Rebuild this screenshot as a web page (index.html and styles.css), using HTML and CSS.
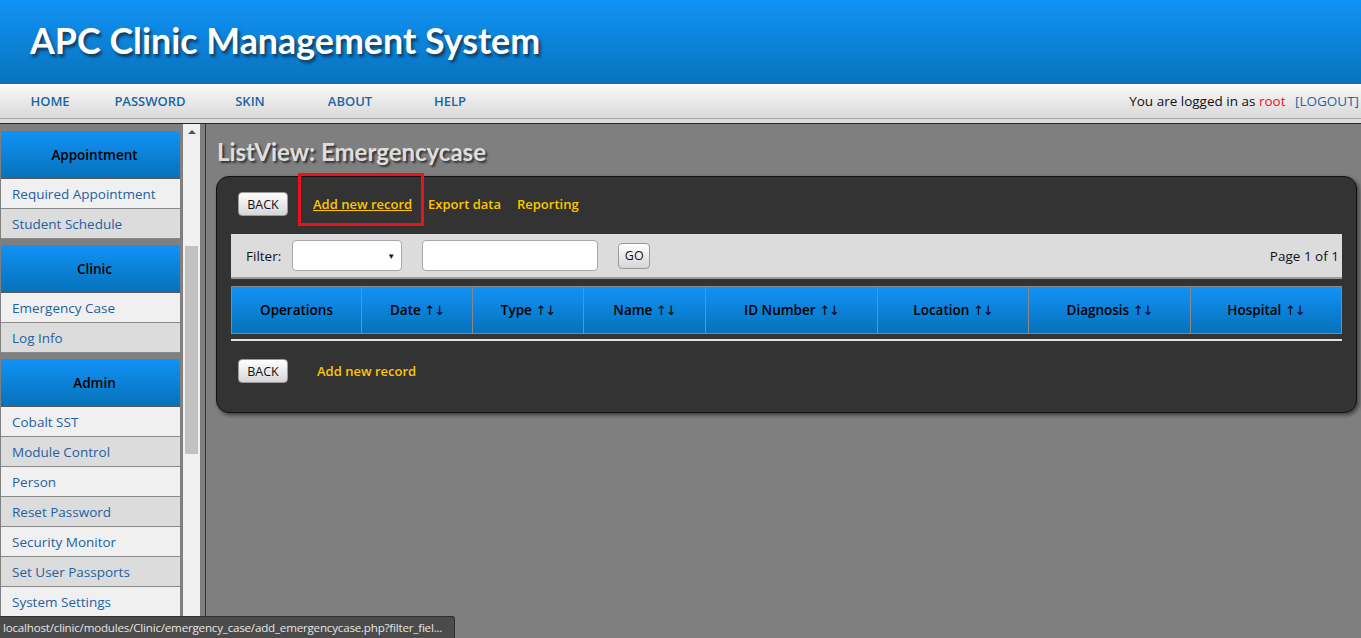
FILE: index.html
```html
<!DOCTYPE html>
<html>
<head>
<meta charset="utf-8">
<title>APC Clinic Management System</title>
<link rel="stylesheet" href="styles.css">
</head>
<body>
<header class="top">
  <h1 class="brand">APC Clinic Management System</h1>
</header>
<nav class="nav">
  <div class="nav-links">
    <a class="nav-item">HOME</a>
    <a class="nav-item">PASSWORD</a>
    <a class="nav-item">SKIN</a>
    <a class="nav-item">ABOUT</a>
    <a class="nav-item">HELP</a>
  </div>
  <div class="login">You are logged in as <span class="user">root</span> <a class="logout">[LOGOUT]</a></div>
</nav>
<div class="nav-under"></div>
<div class="layout">
  <aside class="side">
    <div class="menu">
      <div class="group">
        <div class="group-head">Appointment</div>
        <a class="item">Required Appointment</a>
        <a class="item alt">Student Schedule</a>
      </div>
      <div class="group">
        <div class="group-head">Clinic</div>
        <a class="item">Emergency Case</a>
        <a class="item alt">Log Info</a>
      </div>
      <div class="group">
        <div class="group-head">Admin</div>
        <a class="item">Cobalt SST</a>
        <a class="item alt">Module Control</a>
        <a class="item">Person</a>
        <a class="item alt">Reset Password</a>
        <a class="item">Security Monitor</a>
        <a class="item alt">Set User Passports</a>
        <a class="item">System Settings</a>
      </div>
    </div>
    <div class="scrollbar">
      <div class="sb-arrow"></div>
      <div class="sb-thumb"></div>
    </div>
  </aside>
  <main class="main">
    <h2 class="page-title">ListView: Emergencycase</h2>
    <section class="panel">
      <div class="actions">
        <button class="btn">BACK</button>
        <a class="link first underline">Add new record</a>
        <a class="link">Export data</a>
        <a class="link">Reporting</a>
      </div>
      <div class="highlight"></div>
      <div class="filter">
        <span class="filter-label">Filter:</span>
        <div class="select"><span class="caret">&#9660;</span></div>
        <div class="textbox"></div>
        <button class="btn go">GO</button>
        <span class="pager">Page 1 of 1</span>
      </div>
      <div class="table">
        <div class="th">Operations</div>
        <div class="th">Date <span class="arr">↑↓</span></div>
        <div class="th">Type <span class="arr">↑↓</span></div>
        <div class="th">Name <span class="arr">↑↓</span></div>
        <div class="th">ID Number <span class="arr">↑↓</span></div>
        <div class="th">Location <span class="arr">↑↓</span></div>
        <div class="th">Diagnosis <span class="arr">↑↓</span></div>
        <div class="th last">Hospital <span class="arr">↑↓</span></div>
      </div>
      <div class="rule"></div>
      <div class="actions bottom">
        <button class="btn">BACK</button>
        <a class="link second">Add new record</a>
      </div>
    </section>
  </main>
</div>
<div class="status">localhost/clinic/modules/Clinic/emergency_case/add_emergencycase.php?filter_fiel...</div>
</body>
</html>
```
FILE: styles.css
```css
* { box-sizing: border-box; }
html, body { margin: 0; padding: 0; height: 100%; overflow: hidden; }
body {
  background: #7f7f7f;
  font-family: "Open Sans", "Noto Sans", sans-serif;
  font-size: 14px;
  color: #000;
}
a { text-decoration: none; cursor: pointer; }

.top {
  height: 84px;
  background: linear-gradient(#1192f6, #0773bc);
  display: flex;
  align-items: center;
  padding-left: 30px;
}
.brand {
  margin: 0;
  font-family: "Lato", "Open Sans", sans-serif;
  font-weight: 700;
  font-size: 35.8px;
  color: #fff;
  text-shadow: 2px 3px 3px #123a5c;
  margin-top: -3px;
}

.nav {
  height: 35px;
  background: linear-gradient(#fafafa, #d9d9d9);
  border-bottom: 1px solid #a9a9a9;
  display: flex;
  align-items: center;
  justify-content: space-between;
}
.nav-links { display: flex; }
.nav-item {
  width: 100px;
  text-align: center;
  font-weight: 600;
  font-size: 13px;
  color: #1966a6;
}
.login {
  font-size: 13.5px;
  padding-right: 2px;
  color: #111;
}
.user { color: #e8141c; margin-right: 6px; }
.logout { color: #1966a6; }
.nav-under {
  height: 5px;
  background: #dcdcdc;
  border-bottom: 1px solid #2a2a2a;
}

.layout {
  display: flex;
  height: calc(100% - 125px);
}
.side {
  width: 206px;
  display: flex;
  border-right: 1px solid #333;
  flex: none;
}
.menu {
  width: 179px;
  margin-left: 1px;
  padding-top: 7px;
  display: flex;
  flex-direction: column;
  gap: 6px;
}
.group { display: flex; flex-direction: column; }
.group-head {
  height: 48px;
  background: linear-gradient(#1192f6, #0672ba);
  border-bottom: 1px solid #5a5a5a;
  display: flex;
  align-items: center;
  justify-content: center;
  padding-left: 8px;
  font-weight: 600;
  font-size: 13.5px;
  color: #000;
}
.item {
  height: 30px;
  background: #f0f0f0;
  border-bottom: 1px solid #8a8a8a;
  display: flex;
  align-items: center;
  padding-left: 11px;
  font-size: 13.5px;
  color: #2461a0;
}
.item.alt { background: #dcdcdc; }

.scrollbar {
  width: 17px;
  margin-left: 3px;
  background: #f0f0f0;
  display: flex;
  flex-direction: column;
  align-items: center;
}
.sb-arrow {
  margin-top: 6px;
  width: 0; height: 0;
  border-left: 4px solid transparent;
  border-right: 4px solid transparent;
  border-bottom: 4px solid #505050;
}
.sb-thumb {
  margin-top: 112px;
  width: 13px;
  height: 208px;
  background: #c1c1c1;
}

.main {
  flex: 1;
  padding: 0 4px 0 10px;
}
.page-title {
  margin: 13px 0 0 1px;
  height: 39px;
  font-family: "Lato", "Open Sans", sans-serif;
  font-weight: 700;
  font-size: 24px;
  color: #dedede;
  text-shadow: 2px 2px 2px #333;
}
.panel {
  position: relative;
  height: 237px;
  background: #333;
  border: 1px solid #111;
  border-radius: 13px;
  box-shadow: 2px 2px 4px rgba(0,0,0,0.55);
  padding: 15px 14px 0 14px;
}
.actions {
  height: 24px;
  display: flex;
  align-items: center;
  padding-left: 7px;
}
.btn {
  height: 24px;
  padding: 0;
  border: 1px solid #9a9a9a;
  border-radius: 4px;
  background: linear-gradient(#ffffff, #d6d6d6);
  font-family: "Open Sans", sans-serif;
  font-size: 12.5px;
  color: #111;
  width: 50px;
}
.link {
  color: #ffc600;
  font-weight: 600;
  font-size: 13px;
  margin-left: 16px;
}
.link.first { margin-left: 25px; }
.link.second { margin-left: 29px; }
.underline { text-decoration: underline; }
.highlight {
  position: absolute;
  left: 81px;
  top: -4px;
  width: 126px;
  height: 53px;
  border: 3px solid #e8141c;
  pointer-events: none;
}
.filter {
  margin-top: 18px;
  height: 45px;
  background: #dcdcdc;
  border-bottom: 2px solid #9a9a9a;
  display: flex;
  align-items: center;
  padding: 0 3px 0 15px;
}
.filter-label { font-size: 13.5px; color: #111; }
.select {
  margin-left: 11px;
  width: 110px;
  height: 31px;
  background: #fff;
  border: 1px solid #a8a8a8;
  border-radius: 4px;
  display: flex;
  align-items: center;
  justify-content: flex-end;
  padding-right: 6px;
}
.caret { font-size: 8px; color: #111; }
.textbox {
  margin-left: 20px;
  width: 176px;
  height: 31px;
  background: #fff;
  border: 1px solid #a8a8a8;
  border-radius: 4px;
}
.btn.go {
  margin-left: 20px;
  width: 32px;
  height: 26px;
}
.pager { margin-left: auto; font-size: 13.5px; color: #111; }

.table {
  margin-top: 7px;
  height: 48px;
  display: grid;
  grid-template-columns: 130px 111px 111px 122px 172px 151px 162px 1fr;
  border: 1px solid #888;
  background: linear-gradient(#1192f6, #0672ba);
}
.th {
  display: flex;
  align-items: center;
  justify-content: center;
  border-right: 1px solid #888;
  font-weight: 600;
  font-size: 13.5px;
  color: #000;
  white-space: pre;
}
.th.last { border-right: none; }
.arr {
  font-family: "DejaVu Sans", sans-serif;
  font-weight: 400;
  font-size: 13px;
  letter-spacing: -1px;
}
.rule {
  margin-top: 5px;
  height: 2px;
  background: #e0e0e0;
}
.actions.bottom { margin-top: 18px; }

.status {
  position: fixed;
  left: 0;
  bottom: 0;
  width: 455px;
  height: 22px;
  background: #4b4b4b;
  border: 1px solid #2e2e2e;
  border-left: none;
  border-bottom: none;
  border-top-right-radius: 3px;
  color: #e6e6e6;
  font-size: 11.6px;
  letter-spacing: -0.2px;
  padding-left: 3px;
  display: flex;
  align-items: center;
  white-space: nowrap;
  overflow: hidden;
}
```
